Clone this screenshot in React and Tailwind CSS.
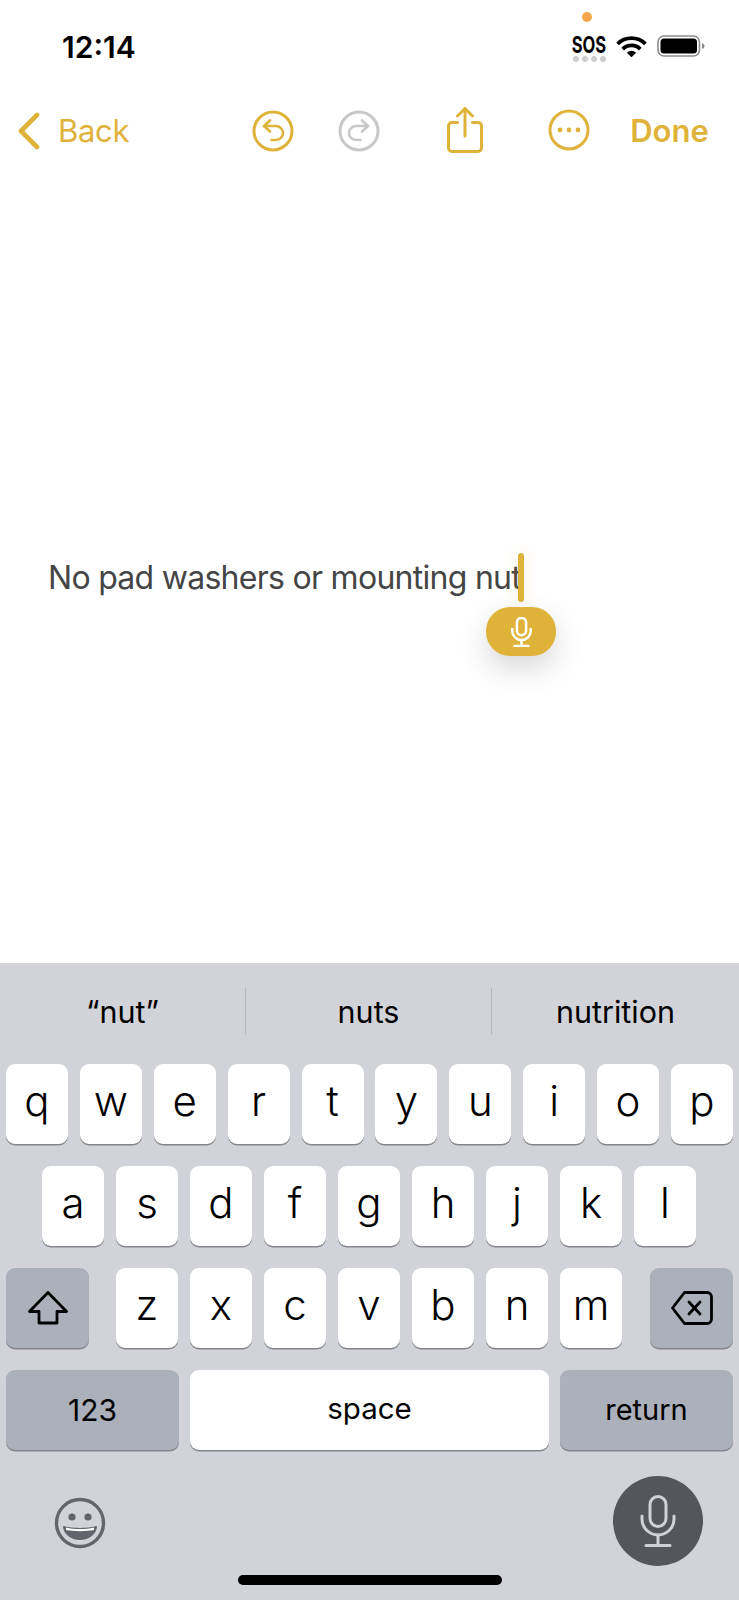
import React from 'react';

const rowOne = ['q', 'w', 'e', 'r', 't', 'y', 'u', 'i', 'o', 'p'];
const rowTwo = ['a', 's', 'd', 'f', 'g', 'h', 'j', 'k', 'l'];
const rowThree = ['z', 'x', 'c', 'v', 'b', 'n', 'm'];

function Key({ children, className = 'w-[62px] bg-white text-[42px] font-[350] pb-[8px]' }) {
  return (
    <div className={`h-[80px] rounded-[9px] flex items-center justify-center text-black shadow-[0_1.5px_0_#85868b] ${className}`}>
      {children}
    </div>
  );
}

function RoundAction({ color, flip = false }) {
  return (
    <svg width="42" height="42" viewBox="0 0 42 42" fill="none" stroke={color} strokeWidth="3" strokeLinecap="round" strokeLinejoin="round">
      <circle cx="21" cy="21" r="19" />
      <g strokeWidth="2.6" transform={flip ? 'matrix(-1 0 0 1 42 0)' : undefined}>
        <path d="M18 10.5L12 16L18 21.5" />
        <path d="M12 16H24A7 7 0 0 1 24 30H19.5" />
      </g>
    </svg>
  );
}

function Mic({ width, height, color, strokeWidth }) {
  return (
    <svg width={width} height={height} viewBox="0 0 36 52" fill="none" stroke={color} strokeWidth={strokeWidth} strokeLinecap="round">
      <rect x="10" y="1.5" width="16" height="30" rx="8" />
      <path d="M2 21V24A16 16 0 0 0 34 24V21" />
      <path d="M18 40V50" />
      <path d="M6 50.5H30" />
    </svg>
  );
}

export default function App() {
  return (
    <div className="relative w-[739px] h-[1600px] flex flex-col bg-white overflow-hidden font-[Inter,sans-serif]">
      {/* status bar */}
      <div className="h-[90px] flex items-start pt-[29px] pl-[62px] pr-[34px]">
        <span className="text-[30px] leading-[36px] font-semibold text-black">12:14</span>
        <div className="ml-auto flex items-start gap-[10px] pt-[6px]">
          <div className="w-[36px] flex flex-col items-center mr-[-1px]">
            <span className="text-[23px] leading-[20px] font-bold text-black scale-x-[0.72]">SOS</span>
            <div className="flex gap-[3px] mt-[1px]">
              <div className="w-[6px] h-[6px] rounded-full bg-[#cdcdcd]" />
              <div className="w-[6px] h-[6px] rounded-full bg-[#cdcdcd]" />
              <div className="w-[6px] h-[6px] rounded-full bg-[#cdcdcd]" />
              <div className="w-[6px] h-[6px] rounded-full bg-[#cdcdcd]" />
            </div>
          </div>
          <svg width="31" height="23" viewBox="0 0 30 22" fill="none" stroke="#000" strokeWidth="3.6">
            <path d="M1.5 8.5A19 19 0 0 1 28.5 8.5" />
            <path d="M6.5 13.5A12 12 0 0 1 23.5 13.5" />
            <path d="M15 21.5L10.5 17A6.4 6.4 0 0 1 19.5 17Z" fill="#000" stroke="none" />
          </svg>
          <svg width="48" height="22" viewBox="0 0 48 22" fill="none">
            <rect x="1" y="1" width="41.5" height="20" rx="6" stroke="#8c8c8c" strokeWidth="1.6" />
            <rect x="3.5" y="3.5" width="36.5" height="15" rx="3.5" fill="#000" />
            <path d="M45 8V14C46.5 13.5 47.5 12.5 47.5 11C47.5 9.5 46.5 8.5 45 8Z" fill="#8c8c8c" />
          </svg>
        </div>
      </div>
      <div className="absolute left-[582px] top-[12px] w-[10px] h-[10px] rounded-full bg-[#f6a64a]" />

      {/* notes toolbar */}
      <div className="h-[82px] flex items-center text-[#dfb23a]">
        <svg width="24" height="38" viewBox="0 0 24 38" fill="none" stroke="#dfb23a" strokeWidth="4.6" strokeLinecap="round" strokeLinejoin="round" className="ml-[17px]">
          <path d="M20 3L4 19L20 35" />
        </svg>
        <span className="ml-[17px] text-[31px] leading-[40px] tracking-[-0.3px]">Back</span>
        <div className="ml-[123px]"><RoundAction color="#dfb23a" /></div>
        <div className="ml-[44px]"><RoundAction color="#c8c8c8" flip /></div>
        <svg width="36" height="46" viewBox="0 0 36 46" fill="none" stroke="#dfb23a" strokeWidth="3" strokeLinecap="round" strokeLinejoin="round" className="ml-[67px] mb-[3px]">
          <path d="M10.5 15.5H5A3.5 3.5 0 0 0 1.5 19V41A3.5 3.5 0 0 0 5 44.5H31A3.5 3.5 0 0 0 34.5 41V19A3.5 3.5 0 0 0 31 15.5H25.5" />
          <path d="M18 29V2" />
          <path d="M10.5 9L18 1.5L25.5 9" />
        </svg>
        <svg width="42" height="42" viewBox="0 0 42 42" fill="none" stroke="#dfb23a" strokeWidth="3" className="ml-[65px] mb-[2px]">
          <circle cx="21" cy="21" r="19" />
          <circle cx="12" cy="21" r="2.4" fill="#dfb23a" stroke="none" />
          <circle cx="21" cy="21" r="2.4" fill="#dfb23a" stroke="none" />
          <circle cx="30" cy="21" r="2.4" fill="#dfb23a" stroke="none" />
        </svg>
        <span className="ml-[40px] text-[31px] leading-[40px] font-semibold">Done</span>
      </div>

      {/* note body */}
      <div className="flex-1 pt-[385px] pl-[48px]">
        <div className="relative inline-block">
          <span className="text-[32px] leading-[42px] font-[370] tracking-[-0.72px] text-[#454545]">No pad washers or mounting nut</span>
          <div className="absolute left-[470px] top-[-4px] w-[6px] h-[49px] rounded-full bg-[#dfb23a] shadow-[0_0_14px_rgba(223,178,58,0.25)]" />
          <div className="absolute left-[438px] top-[50px] w-[70px] h-[49px] rounded-[24px] flex items-center justify-center bg-[#dfb23a] shadow-[0_12px_30px_rgba(0,0,0,0.16)]">
            <Mic width={21} height={30} color="#ffffff" strokeWidth={4.4} />
          </div>
        </div>
      </div>

      {/* keyboard */}
      <div className="h-[637px] bg-[#d1d3d8]">
        <div className="h-[101px] flex items-start pt-[25px] text-[30.5px] font-[370] leading-[47px] text-black">
          <div className="w-[245px] h-[47px] text-center">“nut”</div>
          <div className="w-px h-[47px] bg-[#b5b7bd]" />
          <div className="w-[245px] h-[47px] text-center">nuts</div>
          <div className="w-px h-[47px] bg-[#b5b7bd]" />
          <div className="flex-1 h-[47px] text-center">nutrition</div>
        </div>

        <div className="flex flex-col gap-[22px]">
          <div className="flex justify-between px-[6px]">
            {rowOne.map((k) => <Key key={k}>{k}</Key>)}
          </div>
          <div className="flex justify-center gap-[12px] pr-[1px]">
            {rowTwo.map((k) => <Key key={k}>{k}</Key>)}
          </div>
          <div className="flex px-[6px]">
            <Key className="w-[83px] bg-[#acb0ba]">
              <svg width="40" height="34" viewBox="0 0 40 34" fill="none" stroke="#000" strokeWidth="2.8" strokeLinejoin="round">
                <path d="M20 1.5L38.5 20.5H29V32H11V20.5H1.5Z" />
              </svg>
            </Key>
            <div className="flex gap-[12px] ml-[27px]">
              {rowThree.map((k) => <Key key={k}>{k}</Key>)}
            </div>
            <Key className="w-[83px] ml-auto bg-[#acb0ba]">
              <svg width="42" height="34" viewBox="0 0 42 34" fill="none" stroke="#000" strokeWidth="2.8" strokeLinecap="round" strokeLinejoin="round">
                <path d="M13.5 1.5H36A4.5 4.5 0 0 1 40.5 6V28A4.5 4.5 0 0 1 36 32.5H13.5L1.5 17Z" />
                <path d="M18 11L29 23" />
                <path d="M29 11L18 23" />
              </svg>
            </Key>
          </div>
          <div className="flex justify-between px-[6px]">
            <Key className="w-[173px] bg-[#acb0ba] text-[30px] font-[370]">123</Key>
            <Key className="w-[359px] bg-white text-[29.5px] font-[370] pb-[4px]">space</Key>
            <Key className="w-[173px] bg-[#acb0ba] text-[29px] font-[370]">return</Key>
          </div>
        </div>

        <div className="flex items-start justify-between pt-[26px] pl-[54px] pr-[36px]">
          <svg width="52" height="52" viewBox="0 0 52 52" fill="none" className="mt-[21px]">
            <circle cx="26" cy="26" r="23.5" stroke="#62656b" strokeWidth="3.4" />
            <circle cx="18" cy="20" r="3.6" fill="#62656b" />
            <circle cx="34" cy="20" r="3.6" fill="#62656b" />
            <path d="M9 29C19 31.5 33 31.5 43 29C43 37 35 43 26 43C17 43 9 37 9 29Z" fill="#62656b" />
            <path d="M12 30.5C20 32.5 32 32.5 40 30.5V33C32 34.5 20 34.5 12 33Z" fill="#ffffff" />
          </svg>
          <div className="w-[90px] h-[90px] rounded-full bg-[#53565d] flex items-center justify-center">
            <Mic width={36} height={52} color="#cfd1d6" strokeWidth={3} />
          </div>
        </div>
      </div>

      {/* home indicator */}
      <div className="absolute left-[238px] bottom-[15px] w-[264px] h-[10px] rounded-full bg-black" />
    </div>
  );
}
